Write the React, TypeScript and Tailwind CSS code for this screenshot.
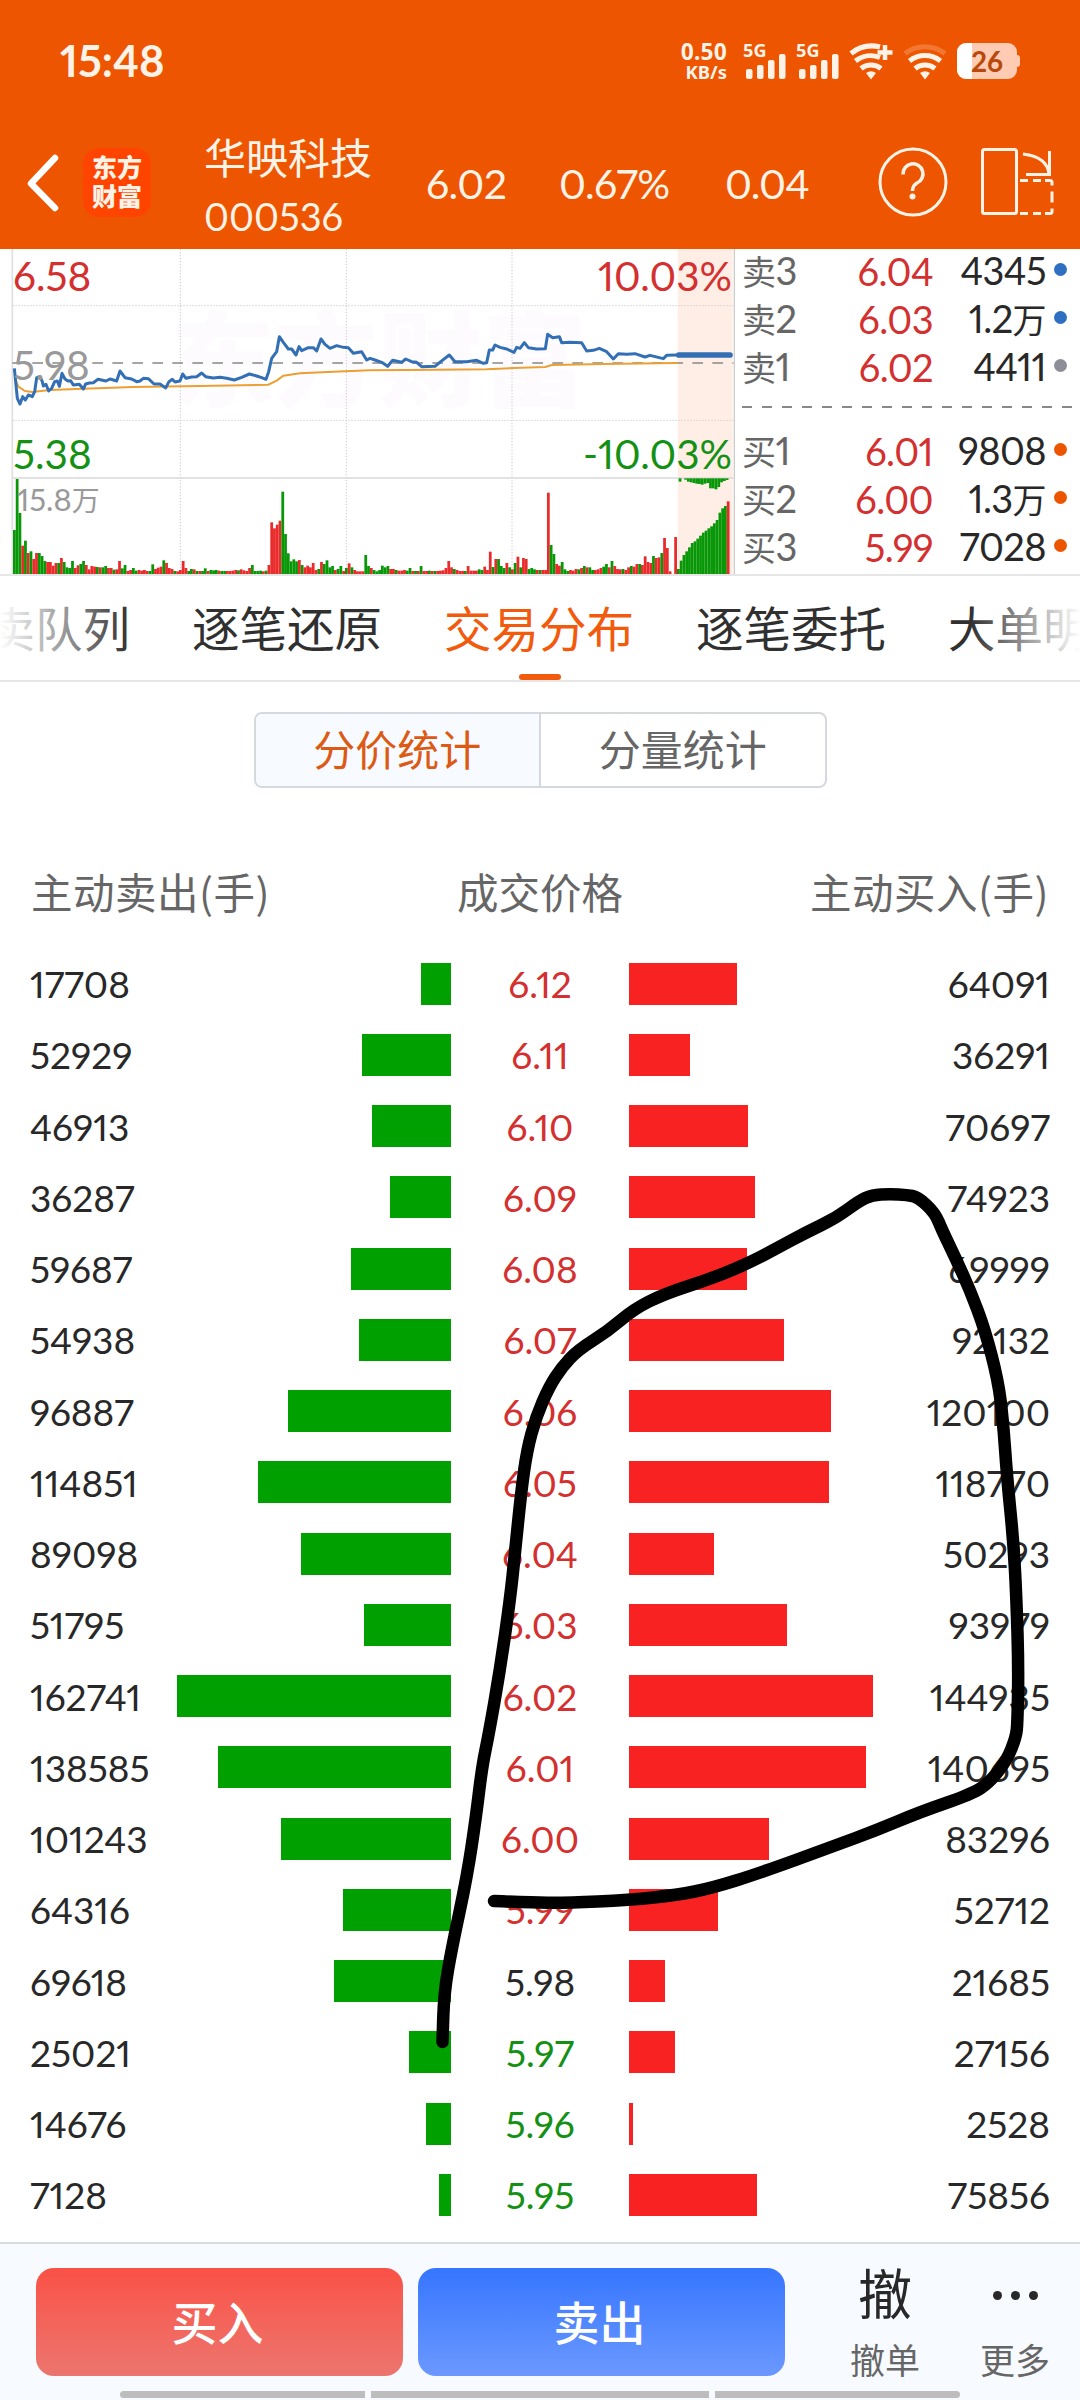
const levels = [
    { price: '6.12', sell: 17708, buy: 64091 },
    { price: '6.11', sell: 52929, buy: 36291 },
    { price: '6.10', sell: 46913, buy: 70697 },
    { price: '6.09', sell: 36287, buy: 74923 },
    { price: '6.08', sell: 59687, buy: 69999 },
    { price: '6.07', sell: 54938, buy: 92132 },
    { price: '6.06', sell: 96887, buy: 120100 },
    { price: '6.05', sell: 114851, buy: 118770 },
    { price: '6.04', sell: 89098, buy: 50293 },
    { price: '6.03', sell: 51795, buy: 93979 },
    { price: '6.02', sell: 162741, buy: 144935 },
    { price: '6.01', sell: 138585, buy: 140695 },
    { price: '6.00', sell: 101243, buy: 83296 },
    { price: '5.99', sell: 64316, buy: 52712 },
    { price: '5.98', sell: 69618, buy: 21685 },
    { price: '5.97', sell: 25021, buy: 27156 },
    { price: '5.96', sell: 14676, buy: 2528 },
    { price: '5.95', sell: 7128, buy: 75856 },
];

const PREV_CLOSE = 5.98;
const PX_PER_LOT = 0.001682;

const asks = [
    { label: '卖', n: '3', price: '6.04', volume: '4345', unit: '', dot: 'bg-[#2f6fc1]' },
    { label: '卖', n: '2', price: '6.03', volume: '1.2', unit: '万', dot: 'bg-[#2f6fc1]' },
    { label: '卖', n: '1', price: '6.02', volume: '4411', unit: '', dot: 'bg-[#8e8e99]' },
];

const bids = [
    { label: '买', n: '1', price: '6.01', volume: '9808', unit: '', dot: 'bg-[#eb5500]' },
    { label: '买', n: '2', price: '6.00', volume: '1.3', unit: '万', dot: 'bg-[#eb5500]' },
    { label: '买', n: '3', price: '5.99', volume: '7028', unit: '', dot: 'bg-[#eb5500]' },
];

const tabs = ['买卖队列', '逐笔还原', '交易分布', '逐笔委托', '大单明细'];

const priceLine =
    '43,370 48,420 52,460 60,477 68,455 76,465 85,450 97,455 104,440 110,398 120,395 127,410 130,423 138,418 146,438 155,430 164,410 172,408 178,424 186,385 195,402 204,408 212,407 220,420 238,418 250,432 257,417 268,414 280,413 294,403 318,408 330,402 350,408 360,378 375,398 395,402 410,410 420,408 430,400 445,401 462,417 480,417 497,429 507,410 517,403 525,411 540,408 548,387 558,400 575,396 590,395 605,384 617,395 640,399 660,397 680,400 703,405 725,397 748,387 770,393 785,398 798,403 806,380 815,340 830,320 838,275 850,292 865,312 875,312 888,330 897,305 905,317 925,308 940,308 950,318 963,282 975,298 990,310 1010,302 1030,307 1045,308 1060,325 1085,320 1100,345 1110,340 1125,345 1145,352 1163,364 1178,346 1205,352 1217,342 1235,350 1250,352 1265,365 1305,364 1322,350 1348,330 1365,350 1400,350 1430,346 1450,355 1460,353 1468,315 1478,315 1485,300 1500,307 1520,312 1542,322 1550,307 1560,310 1573,293 1585,308 1610,312 1636,311 1643,268 1658,278 1678,275 1685,293 1710,292 1745,293 1760,318 1780,316 1798,310 1820,320 1840,342 1855,326 1880,328 1905,326 1935,336 1950,331 1990,341 2000,331 2030,330';

const averageLine =
    '45,400 55,425 75,438 97,441 150,435 250,431 400,426 600,423 805,419 830,407 850,392 900,385 1000,380 1110,376 1310,374 1460,373 1540,369 1636,366 1655,360 1810,357 2035,354';

// one entry per minute, g = down tick, r = up tick
const volumes =
    'g132 g285 g183 r85 g100 r63 g68 r45 r63 g63 g54 g39 r36 r36 r25 r33 g33 r48 g36 g20 g18 g39 r18 r26 g30 g39 r27 r14 r24 r22 g21 r20 g20 g24 r18 r18 g13 r14 r39 g17 g27 r9 r12 g18 g10 r12 r10 r12 r9 g9 g29 r15 r19 r22 g41 r33 r18 r15 g9 r8 r12 r39 r18 g9 g15 r14 g9 r9 g9 g17 r9 g12 g11 g12 r10 g9 g9 r9 r9 r10 r12 g11 r14 r11 r9 r18 g27 g9 g9 g10 r8 g10 r27 r155 r137 r148 r160 g247 g120 g62 g38 g44 g38 r42 g27 r20 r25 r20 r33 r12 g15 r36 g30 g41 g20 g24 r12 g15 g24 r9 g18 r32 g20 r12 r8 r8 r8 g57 g24 r18 g12 g8 g12 g25 g20 g24 r15 r15 g12 r10 r10 r12 g10 g18 r9 g9 r9 g24 r9 r9 g10 r9 g9 r9 r10 r11 r18 r39 r20 g15 r12 r9 r9 g9 r24 r10 r10 r10 g14 g12 r22 r12 r67 g21 r45 g45 g24 g18 r33 g20 r14 g33 r52 g20 r48 r45 g15 g18 g14 r12 g12 r12 r12 r244 g87 g60 r30 r25 g36 g14 g9 r12 r10 r15 g14 r18 g24 r20 g20 g12 r12 r14 r18 g22 g30 r20 g39 r24 r15 r14 g15 r12 r20 g24 r22 r30 g30 r27 r53 r36 r33 g54 r48 r50 g63 r108 r78 r8 g0 r111 g15 g40 g57 g68 g80 g93 g98 g106 g115 g124 g130 g137 g143 g152 g162 g184 g197 g204 r218'.split(' ');

const unmatched = [10, 0, 4, 10, 12, 14, 16, 17, 19, 16, 14, 30, 30, 33, 26, 12, 8, 5];

const strokePoints = [
    [494, 1901], [530, 1902.5], [565, 1903], [630, 1900], [677, 1895], [712, 1888], [760, 1873], [834, 1846], [877, 1830], [920, 1812],
    [972, 1794], [990, 1782], [1007, 1760], [1016, 1737], [1017.5, 1723], [1018.5, 1667], [1016.5, 1600], [1013.6, 1543],
    [1007, 1477], [1003, 1420], [998, 1380], [985, 1330], [970, 1290], [955, 1257], [942, 1230], [935, 1213], [918, 1197], [907, 1195],
    [890, 1194], [872, 1195], [859, 1201], [836, 1218], [807, 1232], [777, 1248], [753, 1261], [716, 1277], [664, 1294],
    [634, 1309], [608, 1331], [578, 1350], [562, 1367], [549, 1387], [536, 1417], [527, 1450], [521, 1493], [515, 1553],
    [510, 1600], [500, 1670], [489, 1733], [482, 1767], [476, 1817], [467, 1877], [452, 1947], [444, 1993], [442.5, 2042],
];

function smoothPath(points: number[][]) {
    let d = `M${points[0][0]} ${points[0][1]}`;
    for (let i = 1; i < points.length - 1; i++) {
        const [x, y] = points[i];
        const [nx, ny] = points[i + 1];
        d += ` Q${x} ${y} ${(x + nx) / 2} ${(y + ny) / 2}`;
    }
    const last = points[points.length - 1];
    return `${d} L${last[0]} ${last[1]}`;
}

function priceColor(price: string) {
    const value = Number(price);
    if (value > PREV_CLOSE) return 'text-[#d3302f]';
    if (value < PREV_CLOSE) return 'text-[#149114]';
    return 'text-[#282828]';
}

export default function App() {
    return (
        <div className="relative flex h-[2400px] w-[1080px] flex-col overflow-hidden bg-white font-['Lato','Noto_Sans_CJK_SC',sans-serif] leading-none proportional-nums">
            <header className="h-[249px] shrink-0 bg-[#ed5500] text-[#fff3e8]">
                <StatusBar />
                <TitleBar />
            </header>
            <section className="flex h-[327px] shrink-0 border-b-2 border-[#e6e6e6]">
                <MinuteChart />
                <OrderBook />
            </section>
            <TabBar />
            <div className="mx-auto mt-[30px] flex h-[76px] w-[573px] shrink-0 overflow-hidden rounded-lg border-2 border-[#d5d8df] text-[42px]">
                <button className="flex flex-1 items-center justify-center border-r-2 border-[#d5d8df] bg-[#f7faff] text-[#dc5a14]">分价统计</button>
                <button className="flex flex-1 items-center justify-center text-[#666]">分量统计</button>
            </div>
            <Distribution />
            <BottomBar />
            <svg className="pointer-events-none absolute inset-0" width="1080" height="2400" fill="none">
                <path d={smoothPath(strokePoints)} stroke="#000" strokeWidth="12.5" strokeLinecap="round" strokeLinejoin="round" />
            </svg>
        </div>
    );
}

function StatusBar() {
    return (
        <div className="flex h-[122px] items-center pl-[60px] pr-[60px]">
            <span className="text-[43.500px] font-bold">15:48</span>
            <div className="ml-auto flex items-center">
                <div className="mr-4 flex w-[46px] flex-col items-end font-['Noto_Sans',sans-serif] font-bold">
                    <span className="text-[22.500px] leading-[20px]">0.50</span>
                    <span className="text-[18.500px] leading-[19px]">KB/s</span>
                </div>
                <Signal />
                <Signal />
                <Wifi plus />
                <Wifi />
                <div className="relative flex h-9 w-[60px] items-center justify-center overflow-hidden rounded-[9px] bg-[#ffccb3]">
                    <div className="absolute inset-y-0 left-0 w-[15px] bg-white" />
                    <span className="relative text-[28px] font-bold text-[#b8480c]">26</span>
                </div>
                <div className="h-3 w-[3px] rounded-r-sm bg-[#ffccb3]" />
            </div>
        </div>
    );
}

function Signal() {
    return (
        <div className="relative mr-[10px] h-9 w-[43px]">
            <span className="absolute left-0 top-0 font-['Noto_Sans',sans-serif] text-[18px] font-bold leading-[14px]">5G</span>
            <svg className="absolute inset-0" width="43" height="36" fill="currentColor">
                <rect x="3" y="26" width="6.5" height="10" rx="2" />
                <rect x="14" y="22" width="6.5" height="14" rx="2" />
                <rect x="25" y="17" width="6.5" height="19" rx="2" />
                <rect x="36" y="11" width="6.5" height="25" rx="2" />
            </svg>
        </div>
    );
}

function Wifi({ plus = false }: { plus?: boolean }) {
    return (
        <svg className="mr-[10px] h-[37px] w-11 shrink-0" viewBox="0 0 44 37" fill="none" stroke="currentColor" strokeWidth="5">
            <path d={plus ? 'M2 10.5A33 33 0 0 1 31 4' : 'M2 10.5A33 33 0 0 1 42 10.5'} opacity={plus ? 1 : 0.22} />
            <path d={plus ? 'M6.5 18A25 25 0 0 1 31 14.5' : 'M6.5 18A25 25 0 0 1 37.5 18'} />
            <path d="M12 25.5A16 16 0 0 1 32 25.5" />
            <path d="M17 30Q22 26.500 27 30L22 36.500z" fill="currentColor" stroke="none" />
            {plus && <path d="M36 2v15M28.500 9.500h15" strokeWidth="4.500" />}
        </svg>
    );
}

function TitleBar() {
    return (
        <div className="flex h-[127px] items-center text-[41px]">
            <svg className="ml-[26px] -mt-[5px] shrink-0" width="34" height="60" fill="none" stroke="#fff" strokeWidth="6.500" strokeLinecap="round" strokeLinejoin="round">
                <path d="M29 5L5 30.500 29 55" />
            </svg>
            <div className="-mt-[7px] ml-[23px] flex h-[69px] w-[68px] shrink-0 flex-col items-center justify-center rounded-[16px] bg-[#ff4400] text-[25px] font-black leading-[29px] text-[#fff3e8]">
                <span>东方</span>
                <span>财富</span>
            </div>
            <div className="ml-[53px] w-[222px]">
                <div className="text-[42px] leading-[56px]">华映科技</div>
                <div className="mt-[5px] text-[38px] leading-[50px]">000536</div>
            </div>
            <span className="-mt-1 w-[133px] tracking-[-0.6px]">6.02</span>
            <span className="-mt-1 w-[166px] tracking-[-0.6px]">0.67%</span>
            <span className="-mt-1 w-[153px] tracking-[-0.9px]">0.04</span>
            <svg className="-mt-2 shrink-0" width="70" height="70" viewBox="0 0 70 70" fill="none" stroke="currentColor" strokeWidth="3">
                <circle cx="35" cy="35" r="33" />
                <path d="M25 27.500a10 10 0 1 1 14 8.500q-4.500 2.500-4.500 8" strokeWidth="3.500" />
                <circle cx="34.500" cy="49.500" r="3" fill="currentColor" stroke="none" />
            </svg>
            <svg className="-mt-2 ml-[33px] shrink-0" width="73" height="68" viewBox="0 0 73 68" fill="none" stroke="currentColor" strokeWidth="3">
                <rect x="1.500" y="1.500" width="34" height="64" rx="2" />
                <path d="M42 6q25 3 26 21M68.500 3v23.500H45" />
                <path d="M39 32.500h8m5 0h8m4 0h5q2 0 2 2v3m0 6v11m0 6v3q0 2-2 2h-5m-4 0h-8m-5 0h-8" />
            </svg>
        </div>
    );
}

function MinuteChart() {
    return (
        <div className="relative h-[325px] w-[735px] shrink-0 text-[40.500px]">
            <div className="absolute left-[170px] top-[58px] text-[104px] font-black text-[#fefbff]">东方财富</div>
            <svg className="absolute inset-0" width="735" height="325" viewBox="0 12 2205 975" fill="none">
                <rect x="2033" y="12" width="165" height="975" fill="#ffeee6" />
                <path d="M37 12V987" stroke="#e0e0e0" strokeWidth="5" />
                <path d="M2203 12V987" stroke="#ccc" strokeWidth="4" />
                <path d="M541 12V987M1039 12V987M1536 12V987M37 182H2200M37 526H2200" stroke="#ccc" strokeWidth="3" strokeDasharray="4 5" />
                <path d="M37 699H2200" stroke="#d8d8d8" strokeWidth="5" />
                <path d="M37 354H2200" stroke="#888" strokeWidth="5" strokeDasharray="32 28" />
                <polyline points={averageLine} stroke="#ec9f33" strokeWidth="6" />
                <polyline points={priceLine} stroke="#336fb5" strokeWidth="9" strokeLinejoin="round" />
                <path d="M2036 330H2190" stroke="#336fb5" strokeWidth="17" strokeLinecap="round" />
                {volumes.map((bar, i) => {
                    const h = Number(bar.slice(1));
                    return <rect key={i} x={39 + i * 8.3} y={987 - h} width="8.3" height={h} fill={bar[0] === 'g' ? '#079707' : '#e92b2b'} />;
                })}
                {unmatched.map((h, i) => (
                    <rect key={i} x={2036 + i * 8.3} y="700" width="8.3" height={h} fill="#079707" />
                ))}
            </svg>
            <span className="absolute left-[13px] top-[7px] text-[#d3302f]">6.58</span>
            <span className="absolute left-[13px] top-[96px] text-[#999]">5.98</span>
            <span className="absolute left-[13px] top-[185px] text-[#149114]">5.38</span>
            <span className="absolute right-[3px] top-[7px] text-[#d3302f]">10.03%</span>
            <span className="absolute right-[3px] top-[185px] text-[#149114]">-10.03%</span>
            <span className="absolute left-[17px] top-[235px] text-[31px] text-[#999]">
                15.8<span className="text-[28px]">万</span>
            </span>
        </div>
    );
}

function OrderBook() {
    return (
        <div className="flex flex-1 flex-col pl-[7px]">
            <div className="-mt-[2px]">
                {asks.map((row) => (
                    <BookRow key={row.label + row.n} {...row} />
                ))}
            </div>
            <svg className="mt-[15px] shrink-0" width="332" height="2">
                <path d="M0 1H330" stroke="#888" strokeWidth="2" strokeDasharray="10 10" />
            </svg>
            <div className="mt-[19px]">
                {bids.map((row) => (
                    <BookRow key={row.label + row.n} {...row} />
                ))}
            </div>
        </div>
    );
}

function BookRow({ label, n, price, volume, unit, dot }: { label: string; n: string; price: string; volume: string; unit: string; dot: string }) {
    return (
        <div className="flex h-12 items-center text-[38px] leading-[48px] tracking-[-0.6px]">
            <span className="w-[80px] text-[#666]">
                <span className="text-[34px]">{label}</span>
                {n}
            </span>
            <span className="w-[111px] text-right text-[#d3302f]">{price}</span>
            <span className="w-[113px] text-right text-[#282828]">
                {volume}
                <span className="text-[34px]">{unit}</span>
            </span>
            <span className={`-mt-1 ml-[8px] size-[13px] rounded-full ${dot}`} />
        </div>
    );
}

function TabBar() {
    return (
        <nav className="relative h-[106px] shrink-0 overflow-hidden border-b-2 border-[#e6e6e6]">
            <div className="-ml-[60px] flex h-full w-max gap-[61px] text-[47.500px] text-[#303030]">
                {tabs.map((tab) => (
                    <div key={tab} className={tab === '交易分布' ? 'relative flex w-[191px] items-center pt-[2px] text-[#f25a0e]' : 'flex w-[191px] items-center pt-[2px]'}>
                        <span className="whitespace-nowrap">{tab}</span>
                        {tab === '交易分布' && <span className="absolute bottom-0 left-[75px] h-[6px] w-[42px] rounded-full bg-[#f25a0e]" />}
                    </div>
                ))}
            </div>
            <div className="absolute inset-y-0 left-0 w-[130px] bg-gradient-to-r from-white to-transparent" />
            <div className="absolute inset-y-0 right-0 w-[110px] bg-gradient-to-l from-white to-transparent" />
        </nav>
    );
}

function Distribution() {
    return (
        <main className="flex flex-1 flex-col pt-[76px]">
            <div className="flex h-[56px] items-center justify-between px-[31px] font-['Noto_Sans_CJK_SC',sans-serif] text-[41.500px] text-[#666]">
                <span className="w-[300px] tracking-[0.5px]">主动卖出(手)</span>
                <span>成交价格</span>
                <span className="w-[300px] text-right tracking-[0.5px]">主动买入(手)</span>
            </div>
            <div className="mt-[28px] text-[37px] text-[#282828]">
                {levels.map((level) => (
                    <div key={level.price} className="flex h-[71.250px] items-center px-[31px]">
                        <span className="-ml-px w-[131px]">{level.sell}</span>
                        <div className="flex w-[290px] justify-end">
                            <div className="h-[42px] bg-[#00a000]" style={{ width: level.sell * PX_PER_LOT }} />
                        </div>
                        <span className={`w-[178px] text-center ${priceColor(level.price)}`}>{level.price}</span>
                        <div className="h-[42px] bg-[#f82222]" style={{ width: level.buy * PX_PER_LOT }} />
                        <span className="-mr-px ml-auto">{level.buy}</span>
                    </div>
                ))}
            </div>
        </main>
    );
}

function BottomBar() {
    return (
        <footer className="flex h-[158px] shrink-0 flex-col border-t-2 border-[#d9dce2] bg-[#f7faff]">
            <div className="flex pl-9 pt-6">
                <button className="mr-[15px] h-[108px] w-[367px] rounded-[18px] bg-gradient-to-b from-[#fa5046] to-[#ec756e] pr-1 pt-[2px] text-[46px] font-medium text-white">买入</button>
                <button className="h-[108px] w-[367px] rounded-[18px] bg-gradient-to-b from-[#3575ff] to-[#6b98ff] pr-1 pt-[2px] text-[46px] font-medium text-white">卖出</button>
                <div className="ml-[56px] flex w-[88px] flex-col items-center text-[#282828]">
                    <span className="text-[54px] leading-[54px]">撤</span>
                    <span className="mt-[21px] text-[35px] text-[#666]">撤单</span>
                </div>
                <div className="ml-[42px] flex w-[88px] flex-col items-center">
                    <div className="flex h-[54px] items-center gap-[9px]">
                        <span className="size-[9px] rounded-full bg-[#282828]" />
                        <span className="size-[9px] rounded-full bg-[#282828]" />
                        <span className="size-[9px] rounded-full bg-[#282828]" />
                    </div>
                    <span className="mt-[21px] text-[35px] text-[#666]">更多</span>
                </div>
            </div>
            <div className="mx-auto mt-[13px] flex h-[7px] w-[840px] gap-[6px]">
                <div className="w-[245px] rounded-l-full bg-[#bdbdbd]" />
                <div className="flex-1 bg-[#bdbdbd]" />
                <div className="w-[245px] rounded-r-full bg-[#bdbdbd]" />
            </div>
        </footer>
    );
}
